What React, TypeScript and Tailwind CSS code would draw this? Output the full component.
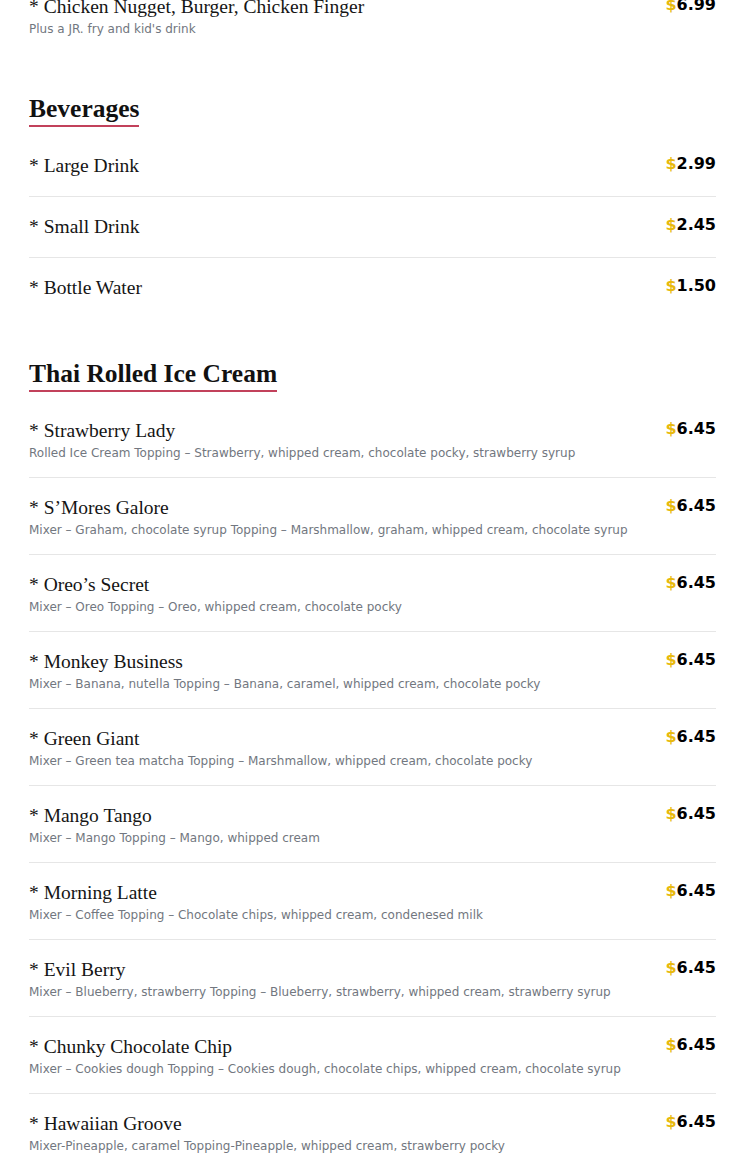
import React from 'react';

interface MenuItem {
  name: string;
  desc?: string;
  price: string;
}

interface Section {
  title?: string;
  items: MenuItem[];
}

const SECTIONS: Section[] = [
  {
    items: [
      { name: 'Chicken Nugget, Burger, Chicken Finger', desc: "Plus a JR. fry and kid's drink", price: '6.99' },
    ],
  },
  {
    title: 'Beverages',
    items: [
      { name: 'Large Drink', price: '2.99' },
      { name: 'Small Drink', price: '2.45' },
      { name: 'Bottle Water', price: '1.50' },
    ],
  },
  {
    title: 'Thai Rolled Ice Cream',
    items: [
      { name: 'Strawberry Lady', desc: 'Rolled Ice Cream Topping – Strawberry, whipped cream, chocolate pocky, strawberry syrup', price: '6.45' },
      { name: 'S’Mores Galore', desc: 'Mixer – Graham, chocolate syrup Topping – Marshmallow, graham, whipped cream, chocolate syrup', price: '6.45' },
      { name: 'Oreo’s Secret', desc: 'Mixer – Oreo Topping – Oreo, whipped cream, chocolate pocky', price: '6.45' },
      { name: 'Monkey Business', desc: 'Mixer – Banana, nutella Topping – Banana, caramel, whipped cream, chocolate pocky', price: '6.45' },
      { name: 'Green Giant', desc: 'Mixer – Green tea matcha Topping – Marshmallow, whipped cream, chocolate pocky', price: '6.45' },
      { name: 'Mango Tango', desc: 'Mixer – Mango Topping – Mango, whipped cream', price: '6.45' },
      { name: 'Morning Latte', desc: 'Mixer – Coffee Topping – Chocolate chips, whipped cream, condenesed milk', price: '6.45' },
      { name: 'Evil Berry', desc: 'Mixer – Blueberry, strawberry Topping – Blueberry, strawberry, whipped cream, strawberry syrup', price: '6.45' },
      { name: 'Chunky Chocolate Chip', desc: 'Mixer – Cookies dough Topping – Cookies dough, chocolate chips, whipped cream, chocolate syrup', price: '6.45' },
      { name: 'Hawaiian Groove', desc: 'Mixer-Pineapple, caramel Topping-Pineapple, whipped cream, strawberry pocky', price: '6.45' },
    ],
  },
];

const Row = ({ item, last }: { item: MenuItem; last: boolean }) => (
  <div className={`flex items-start justify-between gap-4 py-4 ${last ? '' : 'border-b border-[#e6e6e6]'}`}>
    <div className="flex flex-col">
      <span className="text-[19.5px] leading-[28px] text-[#151515] font-['Liberation_Serif',serif]">* {item.name}</span>
      {item.desc && (
        <span className="text-[12px] leading-4 text-[#727780] font-['DejaVu_Sans',sans-serif]">{item.desc}</span>
      )}
    </div>
    <span className="shrink-0 text-[16px] leading-6 font-bold text-black font-['DejaVu_Sans',sans-serif]">
      <span className="text-[#e8b90c]">$</span>
      {item.price}
    </span>
  </div>
);

export default function App() {
  return (
    <div className="min-h-screen bg-white px-[29px] overflow-hidden">
      <div className="-mt-[23px] pb-8">
        {SECTIONS.map((section, si) => (
          <div key={si} className={section.title ? 'mt-10' : ''}>
            {section.title && (
              <h2 className="w-fit border-b-2 border-[#c2415b] text-[25.5px] leading-8 font-bold text-[#111] mb-[9px] font-['Liberation_Serif',serif]">
                {section.title}
              </h2>
            )}
            {section.items.map((item, i) => (
              <Row key={item.name} item={item} last={i === section.items.length - 1} />
            ))}
          </div>
        ))}
      </div>
    </div>
  );
}
